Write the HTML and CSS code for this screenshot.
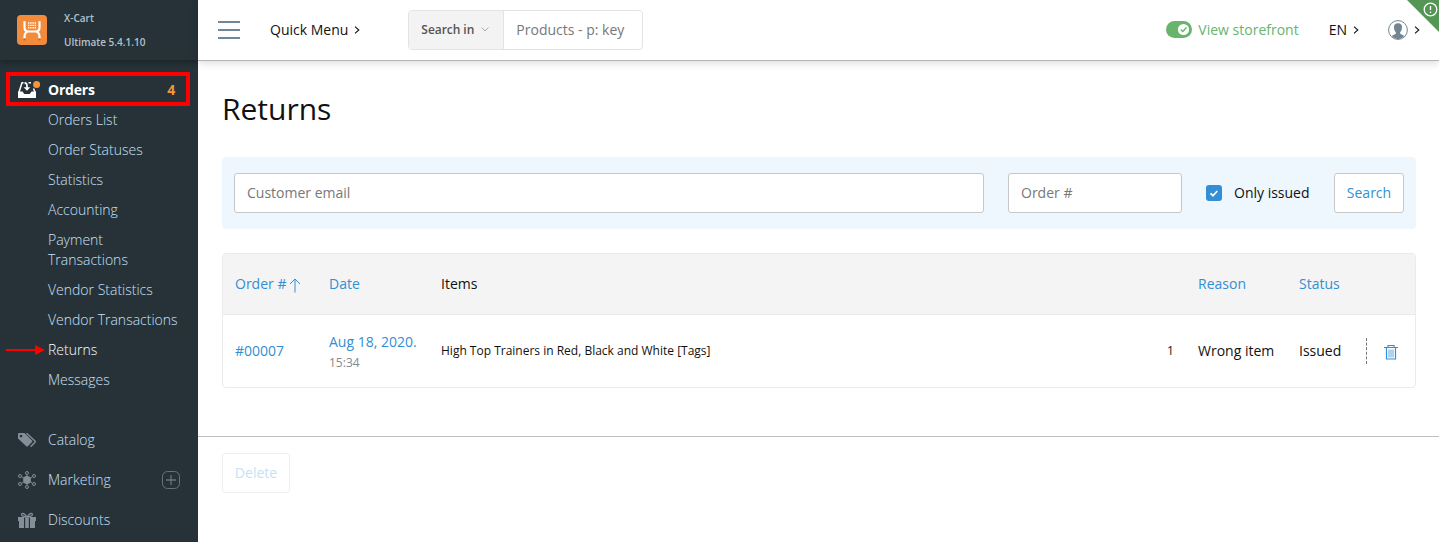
FILE: index.html
```html
<!DOCTYPE html>
<html lang="en">
<head>
<meta charset="utf-8">
<title>Returns</title>
<link rel="stylesheet" href="styles.css">
</head>
<body>
<aside class="sidebar">
  <div class="brand">
    <svg class="logo" width="30" height="30" viewBox="0 0 30 30"><rect width="30" height="30" rx="4" fill="#f38b3c"/><path d="M7.500 6.200v6.300c0 2.500 1.500 4 4 4h7c2.500 0 4-1.500 4-4V6.200M11 16.500c-2.500.6-3.500 2.300-3.500 5.500v1.500M19 16.500c2.500.6 3.500 2.300 3.500 5.500v1.500" fill="none" stroke="#fff" stroke-width="2.200"/><path d="M11 8h8M11 10.400h8M11 12.800h8" stroke="#fff" stroke-width="1.400" stroke-dasharray="1.400 .8"/><circle cx="7.500" cy="24.500" r="1.100" fill="#b8643a"/><circle cx="22.500" cy="24.500" r="1.100" fill="#b8643a"/></svg>
    <div class="brand-text"><span>X-Cart</span><span>Ultimate 5.4.1.10</span></div>
  </div>
  <nav class="menu">
    <a class="orders">
      <svg class="orders-icon" width="23" height="18" viewBox="0 0 23 18"><path d="M0 10.500h4.500l1.800 2.500h5.400l1.800-2.500H18V17H0z" fill="#fff"/><path d="M.9 11.500 4 1.800h1.500M17.100 11.500l-1.600-4" fill="none" stroke="#fff" stroke-width="1.500"/><path d="M6.500 1.800C8.500 1.800 9 3 9 5v2" fill="none" stroke="#fff" stroke-width="1.700"/><path d="M5.700 6.200h6.600L9 9.700z" fill="#fff"/><path d="M10.500 1H13v1.500h-2.500z" fill="#fff"/><circle cx="18.600" cy="3.600" r="3.500" fill="#f3953a"/></svg>
      <span>Orders</span><span class="count">4</span>
    </a>
    <a class="sub">Orders List</a>
    <a class="sub">Order Statuses</a>
    <a class="sub">Statistics</a>
    <a class="sub">Accounting</a>
    <a class="sub">Payment<br>Transactions</a>
    <a class="sub">Vendor Statistics</a>
    <a class="sub">Vendor Transactions</a>
    <a class="sub current"><svg class="arrow" width="39" height="10" viewBox="0 0 39 10"><path d="M0 5h31" stroke="red" stroke-width="2"/><path d="M29 0l10 5-10 5z" fill="red"/></svg>Returns</a>
    <a class="sub">Messages</a>
  </nav>
  <nav class="sections">
    <a class="section"><svg width="18" height="16" viewBox="0 0 18 16"><path fill-rule="evenodd" d="M0 2Q0 1 1 1h5.500L14 8.500q.8.700 0 1.500l-4.200 4.300q-.8.700-1.500 0L0 6.500zM3 2.700a1.300 1.300 0 1 0 .01 0z" fill="#848e98"/><path d="M8.500 1.300 17 9q.5.700 0 1.300L12.600 14.800" fill="none" stroke="#848e98" stroke-width="1.400"/></svg><span>Catalog</span></a>
    <a class="section"><svg width="18" height="18" viewBox="0 0 18 18"><g stroke="#848e98" fill="none"><path d="M9 4v10M3.500 5.700 14.500 12.300M3.500 12.300 14.500 5.700"/><circle cx="9" cy="2" r="1.500"/><circle cx="9" cy="16" r="1.500"/><circle cx="2" cy="5" r="1.500"/><circle cx="16" cy="5" r="1.500"/><circle cx="2" cy="13" r="1.500"/><circle cx="16" cy="13" r="1.500"/></g><circle cx="9" cy="9" r="3.900" fill="#848e98"/></svg><span>Marketing</span>
      <svg class="plus" width="18" height="18" viewBox="0 0 18 18"><rect x=".5" y=".5" width="17" height="17" rx="5" fill="none" stroke="#68727a"/><path d="M9 4v10M4 9h10" stroke="#68727a" stroke-width="1.300"/></svg></a>
    <a class="section"><svg width="18" height="17" viewBox="0 0 18 17"><path d="M0 5h18v4h-1v7h-5V5.500H6V16H1V9H0zM7.200 6h3.600v10H7.200z" fill="#848e98"/><path d="M9 5C7 1.500 4 .2 3.600 2.300 3.400 4 6 4.800 9 5c3-.2 5.600-1 5.400-2.700C14 .2 11 1.500 9 5z" fill="none" stroke="#848e98" stroke-width="1.300"/></svg><span>Discounts</span></a>
  </nav>
</aside>
<div class="page">
  <header class="topbar">
    <svg class="burger" width="22" height="18" viewBox="0 0 22 18"><path d="M0 1h22M0 9h22M0 17h22" stroke="#70879a" stroke-width="2"/></svg>
    <a class="quick">Quick Menu<svg class="chev" width="6" height="8" viewBox="0 0 6 8"><path d="M1 .7 4.800 4 1 7.300" fill="none" stroke="#111" stroke-width="1.100"/></svg></a>
    <div class="searchbox">
      <div class="search-in">Search in<svg width="8" height="5" viewBox="0 0 8 5"><path d="M.5.500 4 4 7.500.500" fill="none" stroke="#a9a9c2"/></svg></div>
      <div class="search-field">Products - p: key</div>
    </div>
    <a class="storefront"><svg width="26" height="17" viewBox="0 0 26 17"><rect width="26" height="17" rx="8.500" fill="#68b46d"/><circle cx="17.500" cy="8.500" r="5.600" fill="#fff"/><path d="M14.800 8.500l2 2 3.700-4" fill="none" stroke="#68b46d" stroke-width="1.400"/></svg>View storefront</a>
    <a class="lang">EN<svg class="chev" width="6" height="8" viewBox="0 0 6 8"><path d="M1 .7 4.800 4 1 7.300" fill="none" stroke="#111" stroke-width="1.100"/></svg></a>
    <a class="user"><svg width="20" height="20" viewBox="0 0 20 20"><circle cx="10" cy="10" r="9.400" fill="#fff" stroke="#718592"/><path d="M10 3.200c3 0 4.200 1.800 4 4.300-.1 2.500-1 3.800-1.800 4.600v1.700c1 .9 2.800 1.200 4 2.200Q13.500 19.300 10 19.300T3.800 16c1.200-1 3-1.300 4-2.200v-1.700C7 11.300 6.100 10 6 7.500 5.800 5 7 3.200 10 3.200z" fill="#718592"/></svg><svg class="chev" width="6" height="8" viewBox="0 0 6 8"><path d="M1 .7 4.800 4 1 7.300" fill="none" stroke="#111" stroke-width="1.100"/></svg></a>
    <svg class="corner" width="32" height="32" viewBox="0 0 32 32"><path d="M0 0h32v32z" fill="#549653"/><circle cx="23.500" cy="9.500" r="6.300" fill="none" stroke="#fff" stroke-width="1.300"/><path d="M23.500 6v4M23.500 11.500v1.500" stroke="#fff" stroke-width="1.300"/></svg>
  </header>
  <main class="content">
    <h1 class="title">Returns</h1>
    <form class="filter">
      <div class="input email">Customer email</div>
      <div class="input order">Order #</div>
      <div class="check"><svg width="16" height="16" viewBox="0 0 16 16"><rect width="16" height="16" rx="3" fill="#338fd3"/><path d="M4.500 8.300l2.500 2.400L11.300 6" fill="none" stroke="#fff" stroke-width="1.700"/></svg>Only issued</div>
      <div class="button">Search</div>
    </form>
    <div class="table">
      <div class="row head">
        <span class="link">Order #<svg class="sort" width="12" height="15" viewBox="0 0 12 15"><path d="M6 1v13.500M1 6l5-5 5 5" fill="none" stroke="#338fd3"/></svg></span><span class="link">Date</span><span>Items</span><span></span><span class="link">Reason</span><span class="link">Status</span><span></span>
      </div>
      <div class="row body">
        <span class="link">#00007</span>
        <span class="date"><span class="link">Aug 18, 2020.</span><span class="time">15:34</span></span>
        <span class="small">High Top Trainers in Red, Black and White [Tags]</span>
        <span class="small qty">1</span>
        <span>Wrong item</span><span>Issued</span>
        <span class="remove"><svg width="14" height="15" viewBox="0 0 14 15"><path d="M0 2.500h14M4 2V.5h6V2M2.500 3v11h9V3" fill="none" stroke="#338fd3" stroke-width="1.200"/><path d="M5 4.500v8M7 4.500v8M9 4.500v8" stroke="#338fd3" stroke-width=".8"/></svg></span>
      </div>
    </div>
  </main>
  <footer class="actions"><div class="button disabled">Delete</div></footer>
</div>
</body>
</html>
```

FILE: styles.css
```css
* { box-sizing: border-box; }
body { margin: 0; height: 542px; overflow: hidden; display: flex; font: 14px/20px "Open Sans", sans-serif; color: #111; background: #fff; }
svg { display: block; flex: none; }
.sidebar { width: 198px; height: 542px; flex: none; background: #263238; color: #c9e0f8; overflow: hidden; }
.brand { height: 60px; display: flex; padding: 15px 0 0 17px; gap: 17px; box-shadow: 0 2px 6px rgba(0,0,0,.35); }
.brand-text { display: flex; flex-direction: column; gap: 4px; margin-top: -7px; font-size: 10px; font-weight: 600; color: #b4c1ca; }
.menu { padding-top: 12px; }
.orders { display: flex; align-items: center; height: 34px; margin: 0 8px 0 6px; padding: 2px 11px 0 8px; border: 4px solid red; color: #fff; font-weight: 700; letter-spacing: -.2px; }
.orders-icon { margin-right: 7px; }
.count { margin-left: auto; color: #f3953a; }
.sub { display: block; position: relative; padding: 5px 0 5px 48px; font-weight: 300; }
.menu .orders + .sub { margin-top: -1px; }
.current { color: #fff; }
.arrow { position: absolute; left: 6px; top: 10px; }
.sections { padding-top: 25px; }
.section { display: flex; align-items: center; height: 40px; padding: 0 18px; gap: 12px; font-weight: 300; }
.plus { margin-left: auto; }
.page { flex: 1; min-width: 0; display: flex; flex-direction: column; }
.topbar { position: relative; height: 61px; flex: none; display: flex; align-items: center; padding: 0 19px 1px 20px; border-bottom: 1px solid #b5b5b5; box-shadow: 0 2px 8px rgba(0,0,0,.15); }
.quick, .lang, .user { display: flex; align-items: center; gap: 6px; }
.chev { margin-top: 1px; }
.quick { margin-left: 30px; }
.searchbox { display: flex; width: 235px; height: 40px; margin-left: 48px; border: 1px solid #e3e3e3; border-radius: 4px; overflow: hidden; }
.search-in { display: flex; align-items: center; width: 95px; padding-left: 12px; gap: 7px; background: #f3f3f3; border-right: 1px solid #e3e3e3; font-size: 12px; font-weight: 600; color: #555; letter-spacing: -.05px; }
.search-field { padding: 9px 12px; color: #777; }
.storefront { display: flex; align-items: center; gap: 6px; margin-left: auto; color: #68b46d; }
.lang { margin-left: 30px; }
.user { margin-left: 29px; }
.corner { position: absolute; top: 0; right: 0; }
.content { padding: 28px 23px 0 24px; height: 375px; flex: none; }
.title { margin: 0; font-size: 30px; line-height: 40px; font-weight: 400; }
.filter { display: flex; align-items: center; height: 72px; margin: 28px 0 24px; padding: 0 12px; border-radius: 4px; background: #eef6fe; }
.input { height: 40px; padding: 9px 12px; border: 1px solid #c8c8c8; border-radius: 3px; background: #fff; color: #777; }
.email { flex: 1; }
.order { width: 174px; margin-left: 24px; }
.check { display: flex; align-items: center; gap: 12px; width: 128px; margin-left: 24px; }
.button { width: 70px; height: 40px; line-height: 38px; text-align: center; border: 1px solid #c8c8c8; border-radius: 3px; background: #fff; color: #338fd3; }
.table { border: 1px solid #ebebeb; border-radius: 4px; overflow: hidden; }
.row { display: grid; grid-template-columns: 94px 112px 1fr 31px 101px 67px 49px; align-items: center; padding-left: 12px; }
.head { height: 61px; background: #f4f4f4; border-bottom: 1px solid #ebebeb; }
.body { height: 72px; }
.link { color: #338fd3; display: flex; align-items: center; }
.sort { margin: 2px 0 0 3px; }
.date { display: flex; flex-direction: column; margin-top: 2px; }
.time { margin-top: 1px; margin-bottom: -1px; font-size: 12px; color: #888; }
.small { font-size: 12px; }
.remove { display: flex; align-items: center; height: 26px; padding: 2px 0 0 17px; border-left: 1px dashed #777; }
.actions { flex: 1; padding: 16px 24px; border-top: 1px solid #bfbfbf; }
.disabled { width: 68px; border-color: #eee; color: #c5e2f7; }
```
